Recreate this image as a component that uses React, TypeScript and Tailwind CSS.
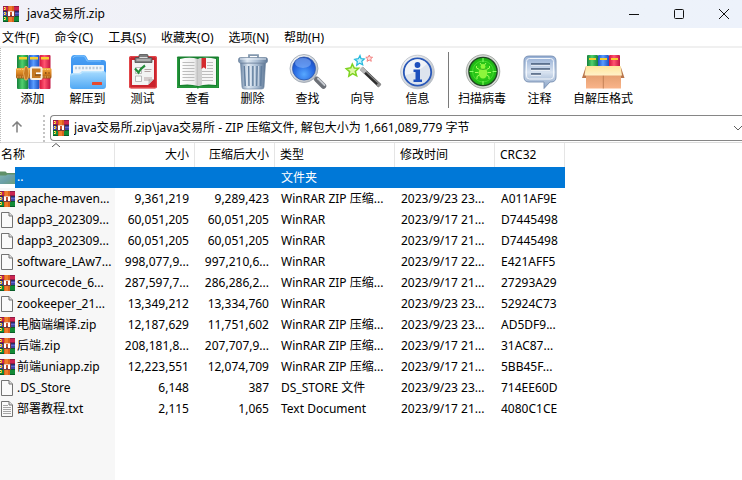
import type { ReactNode } from 'react'

type FileKind = 'folder' | 'zip' | 'file' | 'text'

type Entry = {
  kind: FileKind
  name: string
  size: string
  packed: string
  type: string
  modified: string
  crc: string
}

const menus = ['文件(F)', '命令(C)', '工具(S)', '收藏夹(O)', '选项(N)', '帮助(H)']

const entries: Entry[] = [
  { kind: 'zip', name: 'apache-maven...', size: '9,361,219', packed: '9,289,423', type: 'WinRAR ZIP 压缩...', modified: '2023/9/23 23...', crc: 'A011AF9E' },
  { kind: 'file', name: 'dapp3_202309...', size: '60,051,205', packed: '60,051,205', type: 'WinRAR', modified: '2023/9/17 21...', crc: 'D7445498' },
  { kind: 'file', name: 'dapp3_202309...', size: '60,051,205', packed: '60,051,205', type: 'WinRAR', modified: '2023/9/17 21...', crc: 'D7445498' },
  { kind: 'file', name: 'software_LAw7...', size: '998,077,9...', packed: '997,210,6...', type: 'WinRAR', modified: '2023/9/17 22...', crc: 'E421AFF5' },
  { kind: 'zip', name: 'sourcecode_6...', size: '287,597,7...', packed: '286,286,2...', type: 'WinRAR ZIP 压缩...', modified: '2023/9/17 21...', crc: '27293A29' },
  { kind: 'file', name: 'zookeeper_21...', size: '13,349,212', packed: '13,334,760', type: 'WinRAR', modified: '2023/9/23 23...', crc: '52924C73' },
  { kind: 'zip', name: '电脑端编译.zip', size: '12,187,629', packed: '11,751,602', type: 'WinRAR ZIP 压缩...', modified: '2023/9/23 23...', crc: 'AD5DF9...' },
  { kind: 'zip', name: '后端.zip', size: '208,181,8...', packed: '207,707,9...', type: 'WinRAR ZIP 压缩...', modified: '2023/9/17 21...', crc: '31AC87...' },
  { kind: 'zip', name: '前端uniapp.zip', size: '12,223,551', packed: '12,074,709', type: 'WinRAR ZIP 压缩...', modified: '2023/9/17 21...', crc: '5BB45F...' },
  { kind: 'file', name: '.DS_Store', size: '6,148', packed: '387', type: 'DS_STORE 文件', modified: '2023/9/23 23...', crc: '714EE60D' },
  { kind: 'text', name: '部署教程.txt', size: '2,115', packed: '1,065', type: 'Text Document', modified: '2023/9/17 21...', crc: '4080C1CE' },
]

function ArchiveIcon({ cropped = false }: { cropped?: boolean }) {
  return (
    <svg
      viewBox={cropped ? '1 0 15 16' : '0 0 16 16'}
      className={cropped ? 'block h-4 w-[15px] shrink-0' : 'block size-4 shrink-0'}
      aria-hidden="true"
    >
      <rect width="16" height="5" fill="#8e1c48" />
      <rect y="1" width="16" height="3" fill="#cc2450" />
      <rect y="5" width="16" height="1" fill="#2c2c60" />
      <rect y="6" width="16" height="4" fill="#4046a4" />
      <rect y="7" width="16" height="1" fill="#6268cc" />
      <rect y="10" width="16" height="6" fill="#0a5c28" />
      <rect y="11" width="16" height="4" fill="#128a36" />
      <path d="M1 1h1v1H1zM1 3h1v1H1zM1 6h1v1H1zM1 8h1v1H1zM1 11h1v1H1zM1 13h1v1H1z" fill="#fff08a" />
      <path d="M2 1h1v3H2zM2 6h1v3H2zM2 11h1v3H2z" fill="#e8b81c" />
      <rect x="5" width="6" height="16" fill="#d9601c" />
      <rect x="6" width="3" height="16" fill="#f07c2c" />
      <rect x="4" y="5" width="8" height="6" fill="#7c3a3c" />
      <rect x="5" y="5" width="6" height="1" fill="#e8c4b4" />
      <rect x="5" y="6" width="2" height="4" fill="#fff" />
      <rect x="9" y="6" width="2" height="4" fill="#fff" />
      <rect x="7" y="6" width="2" height="3" fill="#c8502c" />
    </svg>
  )
}

function FileIcon({ kind }: { kind: FileKind }) {
  if (kind === 'zip') return <ArchiveIcon cropped />
  if (kind === 'folder') {
    return (
      <svg viewBox="0 0 15 16" className="block h-4 w-[15px] shrink-0" aria-hidden="true">
        <defs>
          <linearGradient id="folder" x1="0" y1="0" x2="1" y2="1">
            <stop offset="0" stopColor="#7fb3ae" />
            <stop offset=".5" stopColor="#6b9fa8" />
            <stop offset="1" stopColor="#6f9f78" />
          </linearGradient>
        </defs>
        <path d="M0 1.500h5.500l1.500 1.500h8v11H0z" fill="#5f9068" />
        <path d="M0 5.500h6l1.500-1H15v9.500H0z" fill="url(#folder)" />
      </svg>
    )
  }
  return (
    <svg viewBox="0 0 15 16" className="block h-4 w-[15px] shrink-0" aria-hidden="true">
      <path d="M1.500 .5h7.500l3.500 3.500v11.500h-11z" fill="#fafafa" stroke="#737373" />
      <path d="M9 .5v3.500h3.500" fill="#ddd" stroke="#737373" />
      {kind === 'text' && (
        <path d="M3 4.500h5M3 6.500h8M3 8.500h8M3 10.500h8M3 12.500h8" stroke="#a6a6a6" />
      )}
    </svg>
  )
}

function Drawing({ children }: { children: ReactNode }) {
  return (
    <svg viewBox="0 0 44 36" className="block h-9 w-11" aria-hidden="true">
      {children}
    </svg>
  )
}

/* Gradients shared by the toolbar drawings */
function Gradients() {
  return (
    <svg className="absolute size-0" aria-hidden="true">
      <defs>
        <linearGradient id="green">
          <stop offset="0" stopColor="#15803a" />
          <stop offset=".45" stopColor="#4fd06d" />
          <stop offset="1" stopColor="#128038" />
        </linearGradient>
        <linearGradient id="blue">
          <stop offset="0" stopColor="#1d55c8" />
          <stop offset=".45" stopColor="#5a9cff" />
          <stop offset="1" stopColor="#1b4fc0" />
        </linearGradient>
        <linearGradient id="red">
          <stop offset="0" stopColor="#d4143c" />
          <stop offset=".45" stopColor="#ff5470" />
          <stop offset="1" stopColor="#c21240" />
        </linearGradient>
        <linearGradient id="belt" x1="0" y1="0" x2="0" y2="1">
          <stop offset="0" stopColor="#f3ad45" />
          <stop offset=".5" stopColor="#d98423" />
          <stop offset="1" stopColor="#9a5210" />
        </linearGradient>
        <linearGradient id="back" x1="0" y1="0" x2="0" y2="1">
          <stop offset="0" stopColor="#4ba2f6" />
          <stop offset="1" stopColor="#2a7fe4" />
        </linearGradient>
        <linearGradient id="pocket" x1="0" y1="0" x2="0" y2="1">
          <stop offset="0" stopColor="#a8dcff" />
          <stop offset="1" stopColor="#50a8f4" />
        </linearGradient>
        <linearGradient id="page">
          <stop offset="0" stopColor="#fff" />
          <stop offset=".8" stopColor="#eee" />
          <stop offset="1" stopColor="#bbb" />
        </linearGradient>
        <linearGradient id="steel">
          <stop offset="0" stopColor="#6f89a8" />
          <stop offset=".3" stopColor="#dfe9f3" />
          <stop offset=".65" stopColor="#a9bdd3" />
          <stop offset="1" stopColor="#5f7896" />
        </linearGradient>
        <radialGradient id="lens" cx=".5" cy=".75" r=".75">
          <stop offset="0" stopColor="#58a8ff" />
          <stop offset=".6" stopColor="#2667e0" />
          <stop offset="1" stopColor="#1b48b8" />
        </radialGradient>
        <linearGradient id="silver" x1="0" y1="0" x2="1" y2="1">
          <stop offset="0" stopColor="#f8f9fb" />
          <stop offset=".5" stopColor="#d3d8de" />
          <stop offset="1" stopColor="#aeb4bc" />
        </linearGradient>
        <radialGradient id="radar">
          <stop offset="0" stopColor="#3fe01c" />
          <stop offset="1" stopColor="#1cb414" />
        </radialGradient>
        <linearGradient id="bubble" x1="0" y1="0" x2="0" y2="1">
          <stop offset="0" stopColor="#93add4" />
          <stop offset=".5" stopColor="#d7e2f0" />
          <stop offset="1" stopColor="#88a2c6" />
        </linearGradient>
        <linearGradient id="carton" x1="0" y1="0" x2="0" y2="1">
          <stop offset="0" stopColor="#e09a6a" />
          <stop offset="1" stopColor="#f9b48a" />
        </linearGradient>
        <linearGradient id="flap" x1="0" y1="0" x2="0" y2="1">
          <stop offset="0" stopColor="#ffe49a" />
          <stop offset="1" stopColor="#fff1c8" />
        </linearGradient>
      </defs>
    </svg>
  )
}

function AddIcon() {
  return (
    <Drawing>
      <rect x="6" y="1" width="11.500" height="34" rx="1" fill="url(#green)" />
      <rect x="17.500" y="1" width="11" height="34" rx="1" fill="url(#blue)" />
      <rect x="28.500" y="1" width="11" height="34" rx="1" fill="url(#red)" />
      <path d="M8 3h8v2.500H8zM19 3h8v2.500h-8zM30 3h8v2.500h-8z" fill="#f6cf2e" />
      <rect x="5" y="14" width="35.500" height="10.500" rx="1.500" fill="url(#belt)" />
      <path d="M6 15.500h33M6 23h33" stroke="#ffd791" strokeWidth=".7" strokeDasharray="1.5 1" />
      <path d="M16 12.500q3.500 6.500 0 13.500h-2q-3-6.500 0-13.500z" fill="#c87a22" stroke="#f4c377" strokeWidth=".7" />
      <rect x="20" y="13.500" width="10.500" height="11.500" rx="1" fill="#c47824" stroke="#f7eee2" strokeWidth="2" />
      <path d="M25 19.300h6" stroke="#fff" strokeWidth="1.800" />
      <path d="M24 21h6" stroke="#6b3a0c" strokeWidth="1" />
      <path d="M34 19h1.500M37.500 19h1" stroke="#7a4310" strokeWidth="1.500" />
    </Drawing>
  )
}

function ExtractIcon() {
  return (
    <Drawing>
      <path d="M5 5q0-4 3.500-4h9q2 0 3 2l1.500 3h15q3 0 3 3v20q0 3-3 3H8q-3 0-3-3z" fill="url(#back)" />
      <path d="M7 4q1-2 3-2h7q1.500 0 2.500 2l1.500 3h14" fill="none" stroke="#8fcbff" strokeWidth=".8" />
      <rect x="7" y="11" width="31" height="12" rx="1" fill="#eef5fb" />
      <path d="M9 14h28" stroke="#b9cada" strokeWidth="2.500" strokeDasharray="2 1.500" />
      <path d="M4 22q0-3 3-3h6q2 0 3-2h21q3 0 3 3v12q0 3-3 3H7q-3 0-3-3z" fill="url(#pocket)" />
      <path d="M5 21.500q1-1.700 3-1.700h6q1.500 0 2.500-2h20" fill="none" stroke="#d6f0ff" strokeWidth=".8" />
      <rect x="26" y="28" width="10" height="3" rx=".5" fill="#e64a2e" />
    </Drawing>
  )
}

function TestIcon() {
  return (
    <Drawing>
      <rect x="8" y="2" width="28" height="32.500" rx="2" fill="#c9222c" />
      <rect x="8.700" y="2.700" width="26.600" height="31" rx="1.500" fill="none" stroke="#ef5a5a" strokeWidth=".8" />
      <path d="M11 6h22v19l-6 6H11z" fill="#f3f3f3" />
      <path d="M33 25h-5.500v5.500z" fill="#c4c4c4" />
      <path d="M14 8.500V4.500q0-1 1-1h3V1.500q0-1 1-1h7q1 0 1 1v2h3q1 0 1 1v4z" fill="#7e7e7e" stroke="#444" strokeWidth=".7" />
      <path d="M18.500 3.500h8M15.500 6h14" stroke="#ddd" strokeWidth="1" />
      <path d="M14.500 13.500h6v6h-6zM14.500 22h6v5.500h-6z" fill="#fafafa" stroke="#aaa" strokeWidth=".8" />
      <path d="M14 14.500l3.500 4q2-4 6.500-7" fill="none" stroke="#248a38" strokeWidth="2.200" />
      <path d="M23.500 15.500h7M23.500 17.500h6M23 24h8M23 26h6" stroke="#ae9b9b" strokeWidth=".9" />
    </Drawing>
  )
}

function ViewIcon() {
  return (
    <Drawing>
      <path d="M1 3.500q0-1 1-1h40q1 0 1 1V34H1z" fill="#17802e" />
      <path d="M1.800 4v29h18l2 1.500 2-1.500h18V4" fill="none" stroke="#38b24e" strokeWidth=".8" />
      <path d="M4 5q10-2.500 18 0v27q-8-2.500-18-1z" fill="url(#page)" />
      <path d="M22 5q8-2.500 18 0v26q-10-1.500-18 1z" fill="#f6f6f6" />
      <path d="M22 5q2-1 4-1v26.500q-2 .5-4 1.500z" fill="#cfcfcf" />
      <path d="M6.500 8.500h12M6.500 11.500h12M6.500 14.500h12M6.500 17.500h12M6.500 20.500h12M6.500 23.500h12M6.500 26.500h12M31 8.500h6M31 11.500h6M31 14.500h6M26 17.500h11M26 20.500h11M26 23.500h11M26 26.500h11" stroke="#bdbdbd" />
      <path d="M25.500 4h4.500v11l-2.200-1.800-2.300 1.800z" fill="#d42a2e" />
    </Drawing>
  )
}

function DeleteIcon() {
  return (
    <Drawing>
      <path d="M18 4V1.200h9V4" fill="none" stroke="#8398ae" strokeWidth="1.800" />
      <path d="M9.500 9h25l-1.500 24q0 2-2.500 2h-17q-2.500 0-2.500-2z" fill="url(#steel)" stroke="#617a97" strokeWidth=".6" />
      <path d="M13.500 12l.8 20M17.800 12l.3 20M22 12v20M26.200 12l-.3 20M30.500 12l-.8 20" stroke="#637f9f" strokeWidth="1.700" />
      <path d="M14.700 12l.8 20M19 12l.2 20M23.200 12v20M27.400 12l-.4 20" stroke="#eef4fa" strokeWidth=".7" />
      <rect x="7.500" y="3.500" width="29" height="5.500" rx="2" fill="url(#steel)" stroke="#70859d" strokeWidth=".7" />
      <path d="M9 5h26" stroke="#eef4fa" strokeWidth=".9" />
    </Drawing>
  )
}

function FindIcon() {
  return (
    <Drawing>
      <path d="M27 22l4 4" stroke="#a9adb3" strokeWidth="4" />
      <path d="M31 25.500l6.500 6.500" stroke="#6c7077" strokeWidth="5.500" strokeLinecap="round" />
      <path d="M32 24.500l6.500 6.500" stroke="#c8ccd2" strokeWidth="1.800" strokeLinecap="round" />
      <circle cx="18" cy="14.500" r="14" fill="url(#silver)" stroke="#9ba3ae" strokeWidth=".8" />
      <circle cx="18" cy="14.500" r="11.500" fill="url(#lens)" stroke="#3058a8" strokeWidth=".8" />
      <ellipse cx="17" cy="9" rx="8" ry="5" fill="#86b0f7" opacity=".6" />
    </Drawing>
  )
}

function WizardIcon() {
  return (
    <Drawing>
      <path d="M20.500 14.500l18 17" stroke="#2e2e2e" strokeWidth="4" />
      <path d="M22 14.500l17 16" stroke="#8d8d8d" strokeWidth="1.200" />
      <path d="M20 14l4.500 4.300" stroke="#b7b7b7" strokeWidth="4" />
      <path d="M36.500 29.700l2.500 2.400" stroke="#8d8d8d" strokeWidth="4" />
      <path d="M11.300 10l2 4 4.400.2-3.400 3.200 1.300 4.400-4-2.200-3.800 2.600.8-4.600-3.400-3 4.600-.8z" fill="#dff8a8" stroke="#7ed321" strokeWidth="1.500" />
      <path d="M19 1.500l1 3.200 3.300.2-2.500 2.400.9 3.400-3-1.600-3 2.200.6-3.800-2.600-2.200 3.600-.6z" fill="#c8f4ff" stroke="#24b8dc" strokeWidth="1.200" />
      <path d="M28.300 1l.8 2.100 2.500.2-1.900 1.600.6 2.400-2.100-1.200-2.200 1.300.6-2.500-1.800-1.600 2.500-.2z" fill="#ffe0dc" stroke="#f07878" strokeWidth=".9" />
    </Drawing>
  )
}

function InfoIcon() {
  return (
    <Drawing>
      <circle cx="21.500" cy="18" r="16.800" fill="url(#silver)" stroke="#b9bec6" strokeWidth=".8" />
      <circle cx="21.500" cy="18" r="13.700" fill="#dde4ee" stroke="#2857b8" strokeWidth="1.800" />
      <path d="M9 21q12-2 22-11-5-5-10-5Q8 7 9 21z" fill="#fff" opacity=".6" />
      <circle cx="21.500" cy="11" r="2.900" fill="#1e50bd" />
      <path d="M17.500 15.500H24v10h2V28h-8.500v-2.500h2V18h-2z" fill="#1e50bd" />
    </Drawing>
  )
}

function VirusIcon() {
  return (
    <Drawing>
      <circle cx="23" cy="17.500" r="16.800" fill="#d6d9d6" stroke="#8e948e" strokeWidth=".7" />
      <circle cx="23" cy="17.500" r="14.800" fill="#1e4420" />
      <circle cx="23" cy="17.500" r="13.400" fill="url(#radar)" />
      <circle cx="23" cy="17.500" r="10.500" fill="none" stroke="#52e838" strokeWidth=".7" />
      <path d="M23 4v4M23 27v4M9.500 17.500h4M32.500 17.500h4" stroke="#8dff66" strokeWidth="1" />
      <path d="M19.500 15.500l-3-1.500v-2M18.500 18.500h-3.500M19.500 21l-2.500 1.500v2.500M26.500 15.500l3-1.500v-2M27.500 18.500H31M26.500 21l2.500 1.500v2.500M21.500 11l-1.500-2M24.500 11l1.500-2" stroke="#a4ff5e" strokeWidth="1" fill="none" />
      <ellipse cx="23" cy="19" rx="4.300" ry="5.500" fill="#8df63c" />
      <circle cx="23" cy="12.500" r="2.400" fill="#8df63c" />
      <path d="M19.500 14.800q3.500 1.200 7 0" stroke="#1c9a10" strokeWidth=".8" fill="none" />
    </Drawing>
  )
}

function CommentIcon() {
  return (
    <Drawing>
      <path d="M11 2h22q5 0 5 5v16q0 5-5 5h-1l-6 6.500V28H11q-5 0-5-5V7q0-5 5-5z" fill="url(#bubble)" stroke="#7890b2" strokeWidth=".9" />
      <rect x="8.500" y="4.500" width="27" height="20.500" rx="3" fill="none" stroke="#f2f6fb" strokeWidth="1" />
      <path d="M13 10h19M13 15h19M13 20h10" stroke="#3f5473" strokeWidth="1.300" />
      <path d="M13 11.300h19M13 16.300h19M13 21.300h10" stroke="#fff" strokeWidth=".7" />
    </Drawing>
  )
}

function SfxIcon() {
  return (
    <Drawing>
      <rect x="6" y="1" width="11" height="15" rx="1" fill="url(#green)" />
      <rect x="17" y="1" width="11" height="15" rx="1" fill="url(#blue)" />
      <rect x="28" y="1" width="11" height="15" rx="1" fill="url(#red)" />
      <path d="M8 4h7v2H8zM19 4h7v2h-7zM30 4h7v2h-7z" fill="#f6cf2e" />
      <path d="M5 12L1 24h5zM39.500 12L43.500 24h-5z" fill="#b9764c" />
      <path d="M5 18h35v16.500H5z" fill="url(#carton)" />
      <path d="M22.300 21v13.500" stroke="#b9764c" strokeWidth=".8" />
      <path d="M5 12h34.500l1.500 9.500H3.500z" fill="url(#flap)" />
    </Drawing>
  )
}

const tools = [
  { label: '添加', icon: <AddIcon /> },
  { label: '解压到', icon: <ExtractIcon /> },
  { label: '测试', icon: <TestIcon /> },
  { label: '查看', icon: <ViewIcon /> },
  { label: '删除', icon: <DeleteIcon /> },
  { label: '查找', icon: <FindIcon /> },
  { label: '向导', icon: <WizardIcon /> },
  { label: '信息', icon: <InfoIcon /> },
]

const extraTools = [
  { label: '扫描病毒', icon: <VirusIcon /> },
  { label: '注释', icon: <CommentIcon /> },
  { label: '自解压格式', icon: <SfxIcon /> },
]

function ToolButton({ label, icon }: { label: string; icon: ReactNode }) {
  return (
    <button type="button" className="flex min-w-[55px] shrink-0 flex-col items-center gap-px px-1 hover:bg-sky-50">
      {icon}
      <span className="whitespace-nowrap leading-4">{label}</span>
    </button>
  )
}

function TitleBar() {
  return (
    <header className="flex h-7 items-center bg-linear-to-r from-[#f2f1f8] via-[#edf2f7] to-[#edf2fb] pl-[3px]">
      <ArchiveIcon />
      <h1 className="ml-2 flex-1">java交易所.zip</h1>
      <button type="button" aria-label="最小化" className="flex h-6 w-[45px] items-center justify-center">
        <svg viewBox="0 0 10 10" className="size-[10px]" stroke="#111" aria-hidden="true">
          <path d="M0 5.500h10" />
        </svg>
      </button>
      <button type="button" aria-label="最大化" className="flex h-6 w-[45px] items-center justify-center">
        <svg viewBox="0 0 10 10" className="size-[10px]" fill="none" stroke="#111" aria-hidden="true">
          <rect x=".5" y=".5" width="9" height="9" rx="1" />
        </svg>
      </button>
      <button type="button" aria-label="关闭" className="flex h-6 w-[41px] items-center justify-end pr-[13px]">
        <svg viewBox="0 0 10 10" className="size-[10px] overflow-visible" stroke="#111" aria-hidden="true">
          <path d="M0 0l10 10M10 0L0 10" />
        </svg>
      </button>
    </header>
  )
}

function AddressBar() {
  return (
    <div className="flex h-8 items-stretch border-b border-[#dcdcdc]">
      <button type="button" aria-label="向上" className="flex w-8 items-center justify-center">
        <svg viewBox="0 0 12 12" className="size-3" fill="none" stroke="#808080" strokeWidth="1.500" aria-hidden="true">
          <path d="M6 11.500V1M1.500 5.500L6 1l4.500 4.500" />
        </svg>
      </button>
      <div className="ml-[10px] mt-1 border-l-2 border-dotted border-[#c4c4c4]" />
      <div className="relative mb-px ml-[5px] mt-1 flex flex-1 items-center rounded-l-sm border-y border-l border-[#868686] pl-[2px]">
        <ArchiveIcon />
        <select aria-label="路径" className="ml-[5px] flex-1 appearance-none bg-transparent leading-5">
          <option>java交易所.zip\java交易所 - ZIP 压缩文件, 解包大小为 1,661,089,779 字节</option>
        </select>
        <svg viewBox="0 0 8 8" className="pointer-events-none absolute right-0 size-2" fill="none" stroke="#606060" aria-hidden="true">
          <path d="M0 2l4 4 4-4" />
        </svg>
      </div>
    </div>
  )
}

function FileTable() {
  const head = 'border-r border-[#e5e5e5] px-[5px] font-normal'
  const cell = 'overflow-hidden whitespace-nowrap px-[6px]'
  return (
    <table className="w-[565px] table-fixed border-separate border-spacing-0 text-left">
      <colgroup>
        <col className="w-[115px]" />
        <col className="w-20" />
        <col className="w-20" />
        <col className="w-[120px]" />
        <col className="w-[100px]" />
        <col className="w-[70px]" />
      </colgroup>
      <thead>
        <tr className="h-6">
          <th className="relative border-r border-[#e5e5e5] pl-px font-normal">
            名称
            <svg viewBox="0 0 8 4" className="absolute left-[52px] top-0 h-1 w-2" fill="none" stroke="#555" aria-hidden="true">
              <path d="M0 4l4-3.500L8 4" />
            </svg>
          </th>
          <th className={`${head} text-right`}>大小</th>
          <th className={`${head} text-right`}>压缩后大小</th>
          <th className={head}>类型</th>
          <th className={head}>修改时间</th>
          <th className={head}>CRC32</th>
        </tr>
      </thead>
      <tbody>
        <tr className="h-[21px] text-white">
          <td className="p-0">
            <div className="flex h-[21px] items-center">
              <FileIcon kind="folder" />
              <span className="flex-1 self-stretch bg-[#0078d7] pl-[2px] leading-5">..</span>
            </div>
          </td>
          <td className="bg-[#0078d7]" />
          <td className="bg-[#0078d7]" />
          <td className={`${cell} bg-[#0078d7]`}>文件夹</td>
          <td className="bg-[#0078d7]" />
          <td className="bg-[#0078d7]" />
        </tr>
        {entries.map((entry, i) => (
          <tr key={i} className="h-[21px]">
            <td className="overflow-hidden whitespace-nowrap bg-[#f7f7f7] p-0">
              <div className="flex items-center gap-[2px]">
                <FileIcon kind={entry.kind} />
                {entry.name}
              </div>
            </td>
            <td className={`${cell} text-right`}>{entry.size}</td>
            <td className={`${cell} text-right`}>{entry.packed}</td>
            <td className={cell}>{entry.type}</td>
            <td className={cell}>{entry.modified}</td>
            <td className={cell}>{entry.crc}</td>
          </tr>
        ))}
      </tbody>
    </table>
  )
}

export default function App() {
  return (
    <div className="flex min-h-screen flex-col bg-white font-['Noto_Sans','Noto_Sans_CJK_SC',sans-serif] text-[12px] leading-4 text-black">
      <Gradients />
      <TitleBar />

      <nav className="flex h-5 items-end gap-[15px] border-b-2 border-[#f0f0f0] pl-[2px]">
        {menus.map((menu) => (
          <button key={menu} type="button">
            {menu}
          </button>
        ))}
      </nav>

      <div className="border-l border-dotted border-[#bdbdbd]">
        <div className="flex h-[63px] items-start overflow-hidden pl-1 pt-[6px]">
          {tools.map((tool) => (
            <ToolButton key={tool.label} {...tool} />
          ))}
          <div className="ml-[3px] mt-[-2px] h-14 w-px shrink-0 bg-[#7a7a7a]" />
          <div className="ml-[5px] flex gap-[2px]">
            {extraTools.map((tool) => (
              <ToolButton key={tool.label} {...tool} />
            ))}
          </div>
        </div>
        <AddressBar />
      </div>

      <main className="flex flex-1 flex-col">
        <FileTable />
        <div className="w-[115px] flex-1 bg-[#f7f7f7]" />
      </main>
    </div>
  )
}
